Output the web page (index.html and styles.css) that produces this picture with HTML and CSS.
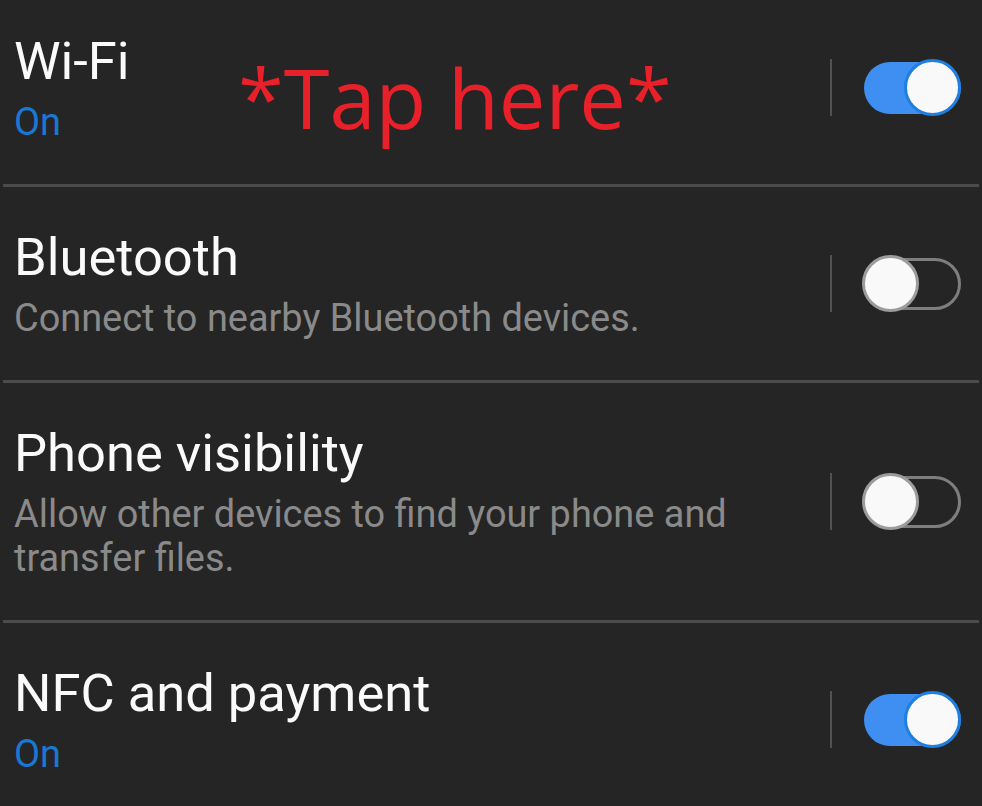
FILE: index.html
```html
<!DOCTYPE html>
<html lang="en">
<head>
<meta charset="utf-8">
<title>Connections</title>
<link rel="stylesheet" href="styles.css">
</head>
<body>
<div class="screen">
  <div class="list">
    <div class="row">
      <div class="text">
        <div class="title">Wi-Fi</div>
        <div class="sub on">On</div>
      </div>
      <div class="control">
        <span class="sep"></span>
        <span class="toggle is-on"><span class="knob"></span></span>
      </div>
    </div>
    <div class="divider"></div>
    <div class="row">
      <div class="text">
        <div class="title">Bluetooth</div>
        <div class="sub">Connect to nearby Bluetooth devices.</div>
      </div>
      <div class="control">
        <span class="sep"></span>
        <span class="toggle is-off"><span class="knob"></span></span>
      </div>
    </div>
    <div class="divider"></div>
    <div class="row">
      <div class="text">
        <div class="title">Phone visibility</div>
        <div class="sub">Allow other devices to find your phone and transfer files.</div>
      </div>
      <div class="control">
        <span class="sep"></span>
        <span class="toggle is-off"><span class="knob"></span></span>
      </div>
    </div>
    <div class="divider"></div>
    <div class="row">
      <div class="text">
        <div class="title">NFC and payment</div>
        <div class="sub on">On</div>
      </div>
      <div class="control">
        <span class="sep"></span>
        <span class="toggle is-on"><span class="knob"></span></span>
      </div>
    </div>
  </div>
  <div class="annotation">*Tap here*</div>
</div>
</body>
</html>
```
FILE: styles.css
```css
html, body {
  margin: 0;
  padding: 0;
  background: #252525;
}
.screen {
  position: relative;
  width: 982px;
  height: 806px;
  overflow: hidden;
  background: #252525;
  font-family: Roboto, "Noto Sans", sans-serif;
}
.list {
  margin-top: -9px;
}
.row {
  display: flex;
  align-items: center;
  padding: 40px 21px 40px 14px;
}
.text {
  flex: 1;
  min-width: 0;
  padding-right: 20px;
}
.title {
  font-size: 52.5px;
  line-height: 60px;
  color: #fafafa;
}
.sub {
  margin-top: 9px;
  font-size: 37.9px;
  line-height: 44px;
  color: #8a8a8a;
}
.sub.on {
  color: #1a78d2;
}
.control {
  display: flex;
  align-items: center;
  gap: 32px;
}
.sep {
  display: block;
  width: 2px;
  height: 57px;
  background: #525252;
}
.toggle {
  position: relative;
  display: block;
  width: 97px;
  height: 57px;
}
.toggle::before {
  content: "";
  position: absolute;
  left: 0;
  right: 0;
  top: 3px;
  height: 52px;
  border-radius: 26px;
  box-sizing: border-box;
}
.toggle.is-on::before {
  background: #3f8ef2;
}
.toggle.is-off::before {
  border: 3px solid #7e7e7e;
  background: transparent;
}
.knob {
  position: absolute;
  top: 0;
  width: 57px;
  height: 57px;
  border-radius: 50%;
  box-sizing: border-box;
  background: #f9f9f9;
}
.toggle.is-on .knob {
  right: 0;
  border: 3px solid #1f7fe0;
}
.toggle.is-off .knob {
  left: -2px;
  border: 3px solid #9c9c9c;
}
.divider {
  height: 3px;
  margin: 0 3px;
  background: #4b4b4b;
}
.annotation {
  position: absolute;
  left: 238px;
  top: 55px;
  font-family: "Open Sans", Lato, sans-serif;
  font-size: 83px;
  line-height: 1;
  color: #e8202a;
  white-space: nowrap;
}
```
